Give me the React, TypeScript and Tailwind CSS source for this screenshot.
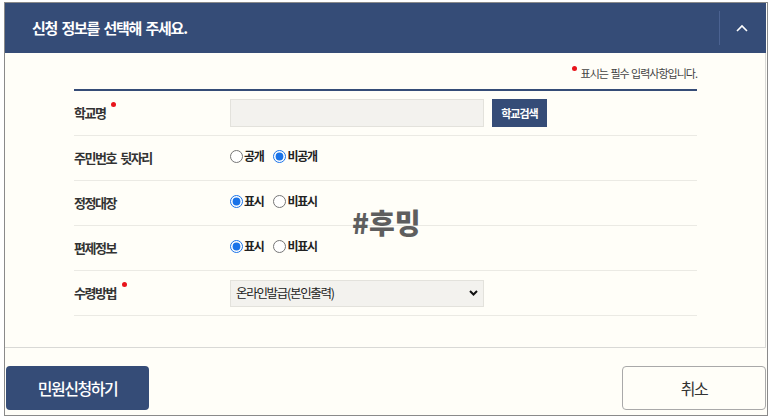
import React from "react";

const font = { fontFamily: '"Noto Sans CJK KR", "Noto Sans", sans-serif' };

function Dot() {
  return <span className="relative -top-[9px] ml-[6px] inline-block h-[5px] w-[5px] rounded-full bg-[#e8141b]" />;
}

function Radio({ name, label, checked }: { name: string; label: string; checked?: boolean }) {
  return (
    <label className="flex items-center">
      <input type="radio" name={name} defaultChecked={checked} className="m-0 h-[13px] w-[13px] accent-[#1a73e8]" />
      <span className="ml-[1px] text-[12px] font-bold tracking-[-1.3px] text-[#222]">{label}</span>
    </label>
  );
}

function Row({ label, req, children }: { label: string; req?: boolean; children: React.ReactNode }) {
  return (
    <div className="flex h-[45px] items-center border-b border-[#ebeae4]">
      <div className="flex w-[156px] items-center whitespace-pre text-[13px] font-bold tracking-[-1.5px] [word-spacing:3px] text-[#333]">
        <span>{label}</span>
        {req && <Dot />}
      </div>
      <div className="flex items-center">{children}</div>
    </div>
  );
}

export default function App() {
  return (
    <div className="relative h-[420px] w-[773px] bg-white pl-[4px] pt-[2px]" style={font}>
      <div className="flex h-[414px] w-[764px] flex-col border border-[#8a8a8a] bg-[#fffef8]">
        <div className="w-[761px]">
          <div className="flex h-[50px] items-center bg-[#354c77]">
            <div className="flex-1 pl-[27px] text-[15px] font-bold tracking-[-1.2px] [word-spacing:2px] text-white">신청 정보를 선택해 주세요.</div>
            <div className="h-[34px] w-px bg-[#4b6291]" />
            <div className="mr-[3px] flex w-[43px] justify-center">
              <svg width="12" height="8" viewBox="0 0 12 8" fill="none">
                <path d="M1 7 L6 2 L11 7" stroke="white" strokeWidth="1.6" />
              </svg>
            </div>
          </div>
          <div className="h-[295px] border-r border-b border-[#d9d9d6] pl-[69px] pt-[12px]">
            <div className="flex h-[16px] w-[623px] items-center justify-end">
              <span className="relative -top-[5px] mr-[4px] inline-block h-[5px] w-[5px] rounded-full bg-[#e8141b]" />
              <span className="text-[11px] tracking-[-1px] [word-spacing:1px] text-[#444]">표시는 필수 입력사항입니다.</span>
            </div>
            <div className="mt-[8px] w-[623px] border-t-2 border-[#354c77]">
              <Row label="학교명" req>
                <div className="h-[28px] w-[254px] border border-[#e3e2dc] bg-[#f3f2ee]" />
                <button className="ml-[8px] flex h-[28px] w-[55px] items-center justify-center bg-[#354c77] text-[11px] font-bold tracking-[-1px] text-white">학교검색</button>
              </Row>
              <Row label="주민번호 뒷자리">
                <div className="-mt-[4px] flex items-center gap-[10px]">
                  <Radio name="a" label="공개" />
                  <Radio name="a" label="비공개" checked />
                </div>
              </Row>
              <Row label="정정대장">
                <div className="-mt-[4px] flex items-center gap-[10px]">
                  <Radio name="b" label="표시" checked />
                  <Radio name="b" label="비표시" />
                </div>
              </Row>
              <Row label="편제정보">
                <div className="-mt-[4px] flex items-center gap-[10px]">
                  <Radio name="c" label="표시" checked />
                  <Radio name="c" label="비표시" />
                </div>
              </Row>
              <Row label="수령방법" req>
                <div className="relative">
                  <select className="h-[27px] w-[254px] appearance-none border border-[#e3e2dc] bg-[#f3f2ee] pl-[5px] text-[12.5px] tracking-[-1.3px] text-[#222] outline-none">
                    <option>온라인발급(본인출력)</option>
                  </select>
                  <svg className="pointer-events-none absolute right-[6px] top-[11px]" width="9" height="6" viewBox="0 0 9 6" fill="none">
                    <path d="M1 1 L4.5 4.5 L8 1" stroke="#111" strokeWidth="2" />
                  </svg>
                </div>
              </Row>
            </div>
          </div>
        </div>
        <div className="flex justify-between pt-[18px]">
          <button className="ml-[1px] flex h-[44px] w-[143px] items-center justify-center rounded-[4px] bg-[#354c77] text-[16px] font-medium tracking-[-1.5px] text-white">민원신청하기</button>
          <button className="mr-[1px] flex h-[44px] w-[144px] items-center justify-center rounded-[4px] border border-[#a9a9a9] bg-[#fffef8] text-[16px] tracking-[-1.5px] text-[#333]">취소</button>
        </div>
      </div>
      <div className="absolute left-[352px] top-[201px] text-[28px] font-black tracking-[0px] text-[#5e5e5e]">#후밍</div>
    </div>
  );
}
